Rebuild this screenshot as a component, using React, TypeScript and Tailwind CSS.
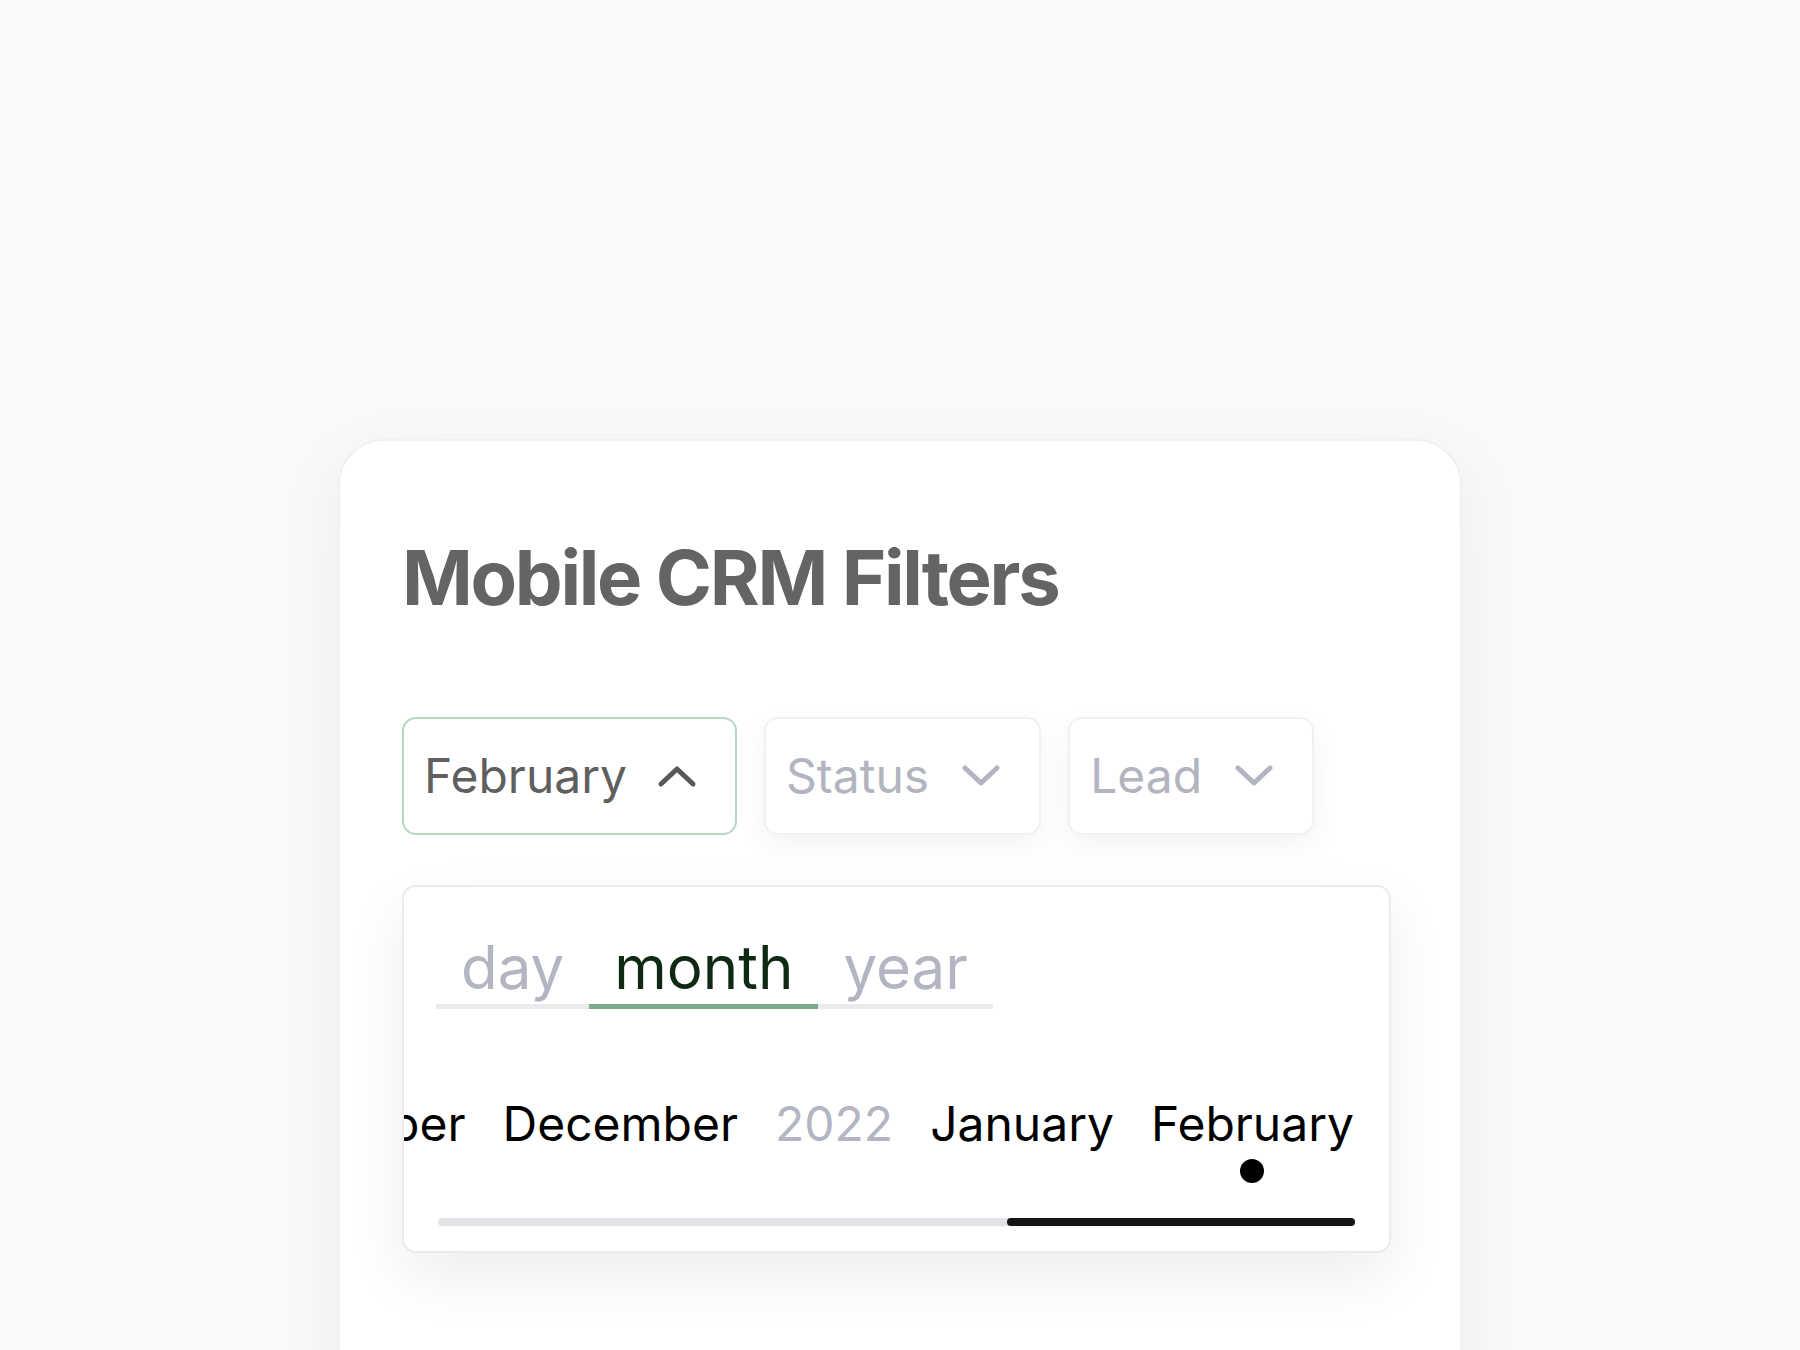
const months = [
    { label: "November", muted: false, active: false },
    { label: "December", muted: false, active: false },
    { label: "2022", muted: true, active: false },
    { label: "January", muted: false, active: false },
    { label: "February", muted: false, active: true },
];

function Chevron({ up, color }: { up?: boolean; color: string }) {
    return (
        <svg width="40" height="24" viewBox="0 0 40 24" fill="none">
            <polyline
                points={up ? "4,20 20,5 36,20" : "4,4 20,19 36,4"}
                stroke={color}
                strokeWidth="5"
                strokeLinecap="round"
                strokeLinejoin="round"
            />
        </svg>
    );
}

function FilterButton({ label, open }: { label: string; open?: boolean }) {
    return (
        <button
            className={
                open
                    ? "h-[118px] flex items-center gap-[30px] pl-[20px] pr-[38px] rounded-[14px] border-[2.5px] border-[#b9d8c3] bg-white"
                    : "h-[118px] flex items-center gap-[32px] pl-[20px] pr-[38px] rounded-[14px] border-2 border-[#f1f1f1] bg-white shadow-[0_10px_30px_rgba(0,0,0,0.05)]"
            }
        >
            <span className={open ? "text-[48px] leading-none text-[#5f5f5f]" : "text-[48px] leading-none text-[#b2b4c0]"}>
                {label}
            </span>
            <Chevron up={open} color={open ? "#585858" : "#b2b4c0"} />
        </button>
    );
}

export default function App() {
    return (
        <div className="h-[1350px] overflow-hidden bg-[#f9f9f9] font-['Inter',sans-serif]">
            <div className="pt-[439px] flex justify-center">
                <div className="w-[1124px] min-h-[1000px] bg-white rounded-[46px] border-2 border-[#f1f1f1] shadow-[0_20px_70px_rgba(0,0,0,0.05)] px-[62px] pt-[98px]">
                    <h1 className="text-[76px] leading-none font-bold tracking-[-0.03em] text-[#646464]">
                        Mobile CRM Filters
                    </h1>

                    <div className="mt-[102px] flex gap-[27px]">
                        <FilterButton label="February" open />
                        <FilterButton label="Status" />
                        <FilterButton label="Lead" />
                    </div>

                    <div className="mt-[50px] w-[989px] rounded-[14px] border-2 border-[#ebebeb] bg-white overflow-hidden shadow-[0_24px_60px_rgba(0,0,0,0.07)] pt-[50px] pb-[25px]">
                        <div className="px-[32px] flex">
                            <div className="flex border-b-[5px] border-[#ebebef]">
                                <div className="px-[25px] pb-[7px] -mb-[5px] border-b-[5px] border-transparent text-[60px] leading-none text-[#b3b5c2]">
                                    day
                                </div>
                                <div className="px-[25px] pb-[7px] -mb-[5px] border-b-[5px] border-[#7aac87] text-[60px] leading-none text-[#0e2a12]">
                                    month
                                </div>
                                <div className="px-[25px] pb-[7px] -mb-[5px] border-b-[5px] border-transparent text-[60px] leading-none text-[#b3b5c2]">
                                    year
                                </div>
                            </div>
                        </div>

                        <div className="mt-[91px] flex justify-end gap-[37px] pr-[35px] whitespace-nowrap">
                            {months.map((m) => (
                                <div key={m.label} className="shrink-0 flex flex-col items-center">
                                    <span className={m.muted ? "text-[48px] leading-none text-[#b3b5c2]" : "text-[48px] leading-none text-black"}>
                                        {m.label}
                                    </span>
                                    <span className={m.active ? "mt-[11px] w-[24px] h-[24px] rounded-full bg-black" : "mt-[11px] w-[24px] h-[24px]"} />
                                </div>
                            ))}
                        </div>

                        <div className="mt-[35px] px-[34px]">
                            <div className="h-[8px] rounded-full bg-[#e2e3e6] flex justify-end">
                                <div className="w-[348px] h-full rounded-full bg-[#151515]" />
                            </div>
                        </div>
                    </div>
                </div>
            </div>
        </div>
    );
}
